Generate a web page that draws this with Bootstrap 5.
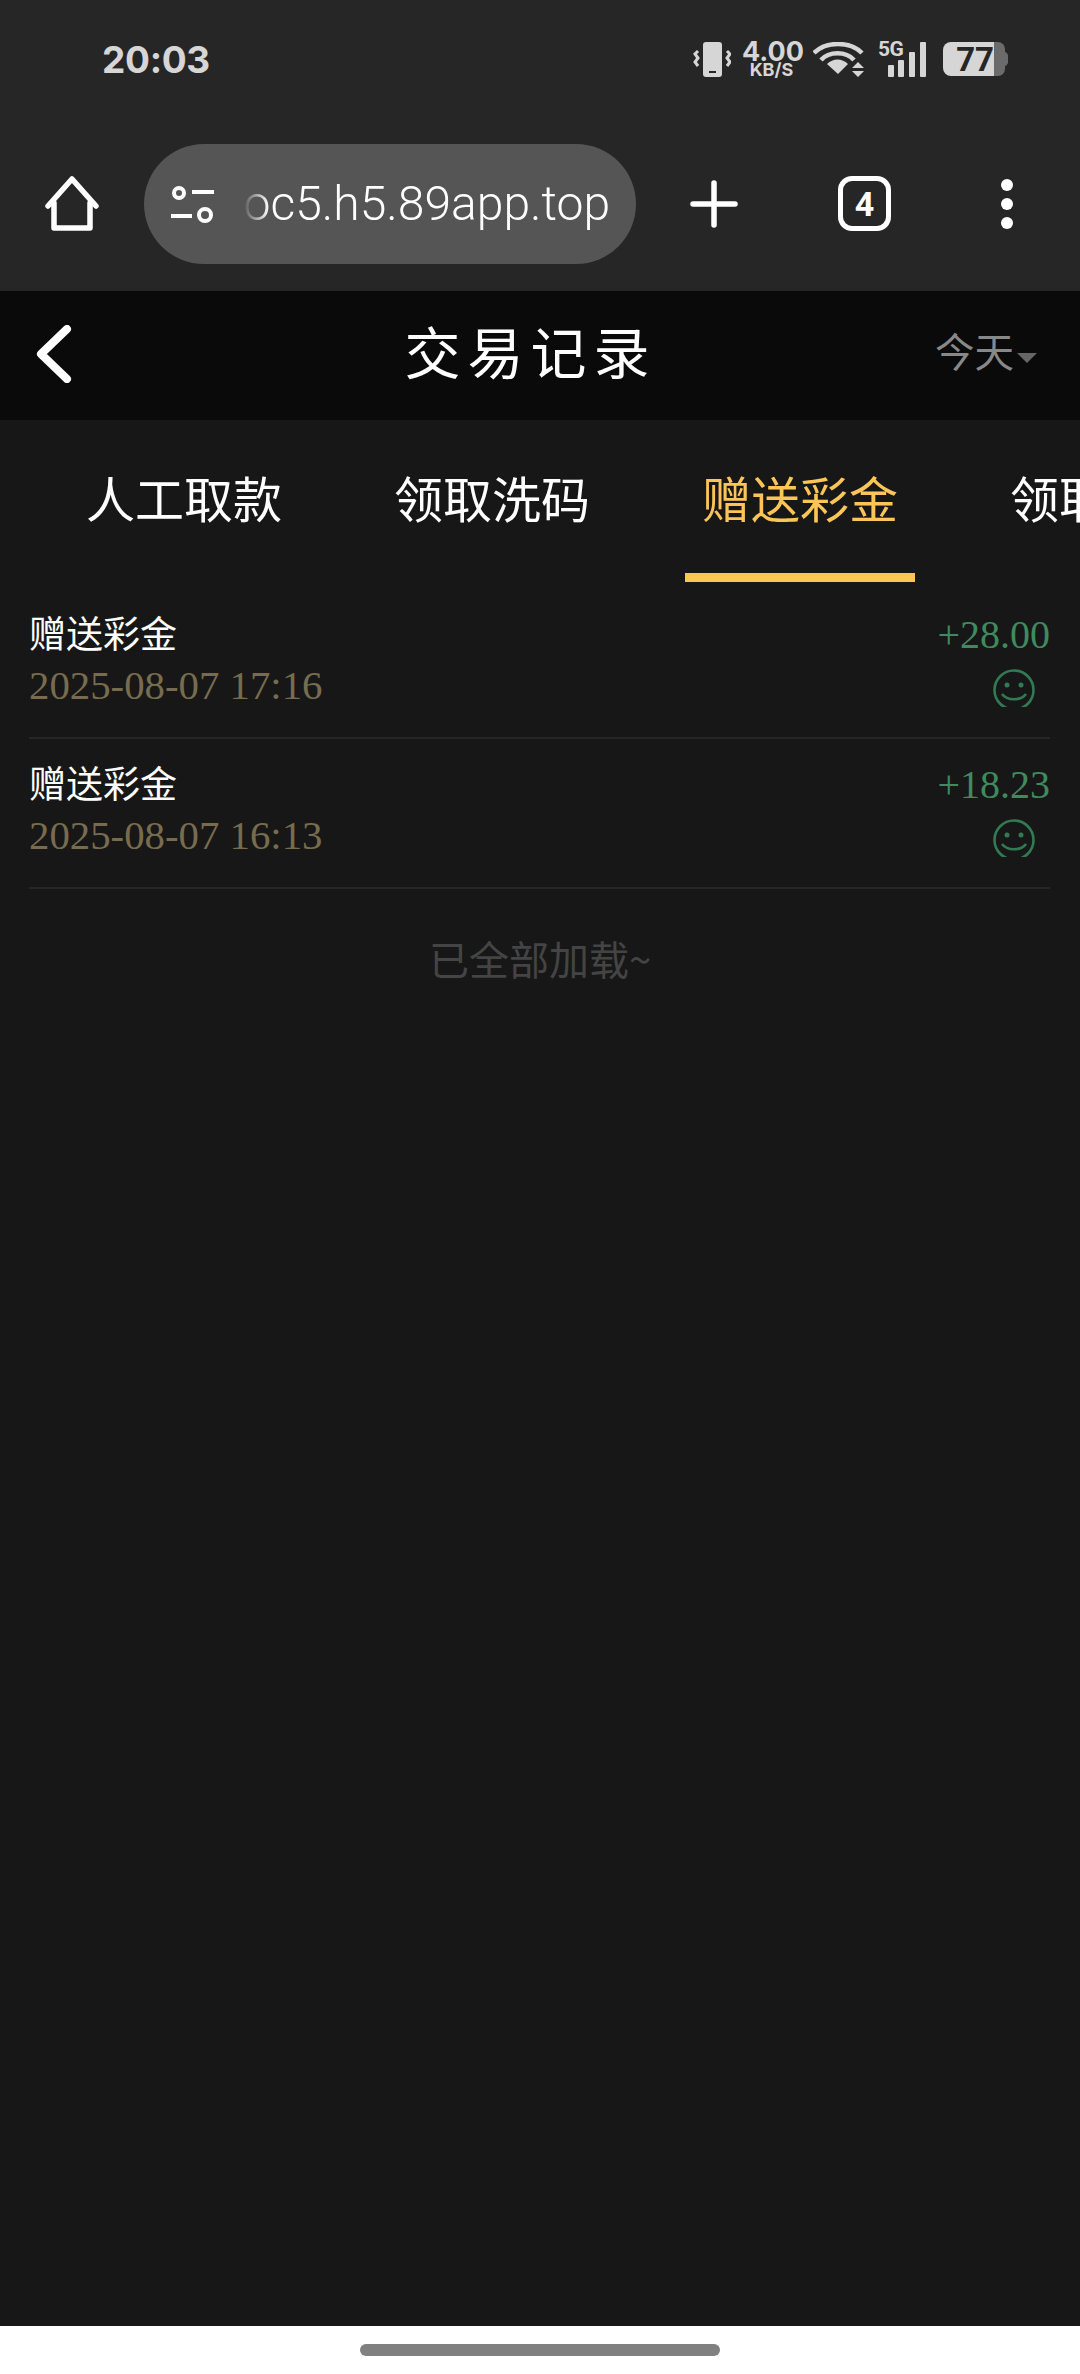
<!DOCTYPE html>
<html lang="zh-CN">
<head>
  <meta charset="UTF-8" />
  <meta name="viewport" content="width=device-width, initial-scale=1" />
  <title>交易记录</title>
  <link href="https://cdn.jsdelivr.net/npm/bootstrap@5.3.0/dist/css/bootstrap.min.css" rel="stylesheet" />
  <style>
    html, body { height: 2374px; overflow: hidden; }
    body {
      background: #171717;
      color: #fff;
      font-family: "Noto Sans CJK SC", "Liberation Sans", sans-serif;
    }
    svg { display: block; flex: none; }

    .phone-top { background: #262626; height: 291px; }
    .status-row { height: 118px; padding-left: 102px; padding-right: 72px; color: #d6d6d6; }
    .status-time { font: 700 37px/1 Inter, Roboto, sans-serif; letter-spacing: -.3px; }
    .status-speed { width: 59px; margin: 0 12px 0 11px; text-align: center; font-family: Inter, Roboto, sans-serif; font-weight: 700; }
    .speed-num { font-size: 27px; line-height: 21px; }
    .speed-unit { font-size: 18px; line-height: 14px; margin-top: 1px; white-space: nowrap; }
    .status-signal { margin-left: 14px; width: 48px; height: 35px; position: relative; }
    .signal-label { position: absolute; left: 0; top: -3px; font: 700 21px/21px Roboto, sans-serif; letter-spacing: -.5px; }
    .status-battery { margin-left: 17px; width: 65px; height: 34px; position: relative; }
    .battery-label {
      position: absolute; left: 0; top: 0; width: 51px; height: 34px;
      color: #262626; font: 700 33px/35px Roboto, sans-serif; text-align: right;
    }

    .tool-row { height: 171px; padding-left: 45px; }
    .url-pill { width: 492px; height: 120px; margin: 0 54px 0 45px; background: #555; padding: 0 26px; }
    .url-text {
      width: 379px; margin-left: 20px; overflow: hidden; white-space: nowrap;
      font: 300 48px/60px Roboto, sans-serif;
      -webkit-mask-image: linear-gradient(to right, transparent 8px, #000 34px);
      mask-image: linear-gradient(to right, transparent 8px, #000 34px);
    }
    .tab-count {
      width: 53px; height: 55px; margin: 0 110px 0 100px;
      border: 5px solid #fff; border-radius: 14px;
      font: 700 34px/1 Roboto, sans-serif;
    }

    .page-head { background: #0a0a0a; height: 129px; padding-left: 36px; }
    .head-back { width: 105px; padding-bottom: 3px; }
    .head-title { font-size: 56px; letter-spacing: 7px; line-height: 1; padding-bottom: 12px; }
    .head-date { width: 160px; color: #888; font-size: 39.5px; padding: 0 0 12px 15px; }
    .head-caret {
      width: 0; height: 0; margin: 16px 0 0 3px;
      border-left: 10px solid transparent; border-right: 10px solid transparent; border-top: 10px solid #666;
    }

    .record-tabs { height: 162px; padding-left: 69px; gap: 78px; overflow: hidden; flex-wrap: nowrap; }
    .record-tabs .nav-link {
      flex: none; width: 230px; height: 162px; padding: 47px 0 0;
      color: #fff; font-size: 49px; line-height: 60px; text-align: center; white-space: nowrap;
      border-bottom: 9px solid transparent;
    }
    .record-tabs .nav-link.active { color: #fdc558; border-bottom-color: #fdc558; }

    .record-list { margin: 7px 30px 0 29px; }
    .record-list.list-group-flush > .list-group-item {
      background: transparent; color: #fff; height: 150px;
      padding: 21px 0 0; border-color: #262626; border-width: 0 0 2px;
    }
    .record-name { font-size: 37px; line-height: 50px; margin: -3px 0 3px; }
    .record-date, .record-amount { font-family: "Liberation Serif", serif; }
    .record-date { color: #786c4e; font-size: 40.8px; line-height: 52px; }
    .record-amount { color: #3f8a5e; font-size: 40px; line-height: 50px; }
    .record-face { margin: 9px 15px 0 auto; }

    .list-end { color: #444; font-size: 40px; line-height: 50px; margin-top: 44px; text-align: center; }

    .gesture-bar { height: 48px; background: #fff; }
    .gesture-pill { width: 360px; height: 12px; border-radius: 6px; background: #808080; }
  </style>
</head>
<body class="d-flex flex-column">
  <div class="phone-top">
    <div class="status-row d-flex align-items-center">
      <div class="status-time me-auto">20:03</div>
      <svg width="38" height="35" viewBox="0 0 38 35" fill="none">
        <rect x="10" y="0" width="19" height="35" rx="3" fill="#d6d6d6" />
        <rect x="16" y="29" width="7" height="2" fill="#262626" />
        <path d="M5 9l-3 3 3 4-3 4 3 4M34 9l3 3-3 4 3 4-3 4" stroke="#d6d6d6" stroke-width="3" />
      </svg>
      <div class="status-speed">
        <div class="speed-num">4.00</div>
        <div class="speed-unit">KB/S</div>
      </div>
      <svg width="51" height="35" viewBox="0 0 51 35" fill="none">
        <path d="M1 11C13 -1 37 -1 49 11" stroke="#d6d6d6" stroke-width="4.500" />
        <path d="M8 18C16 9 33 9 41 18" stroke="#d6d6d6" stroke-width="4.500" />
        <path d="M14 22C20 16 29 16 35 22L25 32Z" fill="#d6d6d6" />
        <path d="M45 20l6 6H39ZM45 35l6-6H39Z" fill="#d6d6d6" />
      </svg>
      <div class="status-signal">
        <span class="signal-label">5G</span>
        <svg width="48" height="35" viewBox="0 0 48 35" fill="#d6d6d6">
          <rect x="10" y="23" width="6" height="12" rx="1" />
          <rect x="20" y="18" width="6" height="17" rx="1" />
          <rect x="31" y="10" width="6" height="25" rx="1" />
          <rect x="42" y="0" width="6" height="35" rx="1" />
        </svg>
      </div>
      <div class="status-battery">
        <svg width="65" height="34" viewBox="0 0 65 34">
          <path d="M8 0H51V34H8A8 8 0 0 1 0 26V8A8 8 0 0 1 8 0Z" fill="#d6d6d6" />
          <path d="M51 0H55A7 7 0 0 1 62 7V10A3.5 7 0 0 1 62 24V27A7 7 0 0 1 55 34H51Z" fill="#6b6b6b" />
        </svg>
        <div class="battery-label">77</div>
      </div>
    </div>
    <div class="tool-row d-flex align-items-center">
      <svg width="54" height="55" viewBox="0 0 54 55" fill="none" stroke="#fff" stroke-width="5.500" stroke-linecap="round" stroke-linejoin="round">
        <path d="M3 30L27 3L51 30" />
        <path d="M9 27V52H45V27" />
      </svg>
      <div class="url-pill rounded-pill d-flex align-items-center">
        <svg width="45" height="38" viewBox="0 0 45 38" fill="none" stroke="#fff" stroke-width="4">
          <circle cx="9" cy="8" r="5" />
          <path d="M22 7H44M1 31H22" />
          <circle cx="35" cy="30" r="6" />
        </svg>
        <div class="url-text d-flex justify-content-end"><span>oc5.h5.89app.top</span></div>
      </div>
      <svg width="48" height="48" viewBox="0 0 48 48" stroke="#fff" stroke-width="5.500" stroke-linecap="round">
        <path d="M24 3V45M3 24H45" />
      </svg>
      <div class="tab-count d-flex align-items-center justify-content-center">4</div>
      <svg width="12" height="50" viewBox="0 0 12 50" fill="#fff">
        <circle cx="6" cy="6" r="6" />
        <circle cx="6" cy="25" r="6" />
        <circle cx="6" cy="44" r="6" />
      </svg>
    </div>
  </div>

  <div class="page-head d-flex align-items-center">
    <div class="head-back">
      <svg width="36" height="58" viewBox="0 0 36 58" fill="none" stroke="#fff" stroke-width="8" stroke-linecap="round" stroke-linejoin="round">
        <path d="M31 4L5 29L31 54" />
      </svg>
    </div>
    <div class="head-title flex-grow-1 text-center">交易记录</div>
    <div class="head-date d-flex align-items-center">今天<span class="head-caret"></span></div>
  </div>

  <nav class="nav record-tabs">
    <a class="nav-link" href="#">人工取款</a>
    <a class="nav-link" href="#">领取洗码</a>
    <a class="nav-link active" href="#">赠送彩金</a>
    <a class="nav-link" href="#">领取返水</a>
  </nav>

  <main class="flex-grow-1">
    <ul class="list-group list-group-flush record-list">
      <li class="list-group-item d-flex justify-content-between">
        <div>
          <div class="record-name">赠送彩金</div>
          <div class="record-date">2025-08-07 17:16</div>
        </div>
        <div>
          <div class="record-amount">+28.00</div>
          <svg class="record-face" width="42" height="38" viewBox="0 0 42 38" fill="none" stroke="#317a54" stroke-width="2.600">
            <circle cx="21" cy="21" r="19.500" />
            <circle cx="14" cy="16" r="2.500" fill="#317a54" stroke="none" />
            <circle cx="28" cy="16" r="2.500" fill="#317a54" stroke="none" />
            <path d="M9 25C14 32 28 32 33 25" />
          </svg>
        </div>
      </li>
      <li class="list-group-item d-flex justify-content-between">
        <div>
          <div class="record-name">赠送彩金</div>
          <div class="record-date">2025-08-07 16:13</div>
        </div>
        <div>
          <div class="record-amount">+18.23</div>
          <svg class="record-face" width="42" height="38" viewBox="0 0 42 38" fill="none" stroke="#317a54" stroke-width="2.600">
            <circle cx="21" cy="21" r="19.500" />
            <circle cx="14" cy="16" r="2.500" fill="#317a54" stroke="none" />
            <circle cx="28" cy="16" r="2.500" fill="#317a54" stroke="none" />
            <path d="M9 25C14 32 28 32 33 25" />
          </svg>
        </div>
      </li>
    </ul>
    <div class="list-end">已全部加载~</div>
  </main>

  <div class="gesture-bar d-flex justify-content-center align-items-center">
    <div class="gesture-pill"></div>
  </div>

  <script src="https://cdn.jsdelivr.net/npm/bootstrap@5.3.0/dist/js/bootstrap.bundle.min.js"></script>
</body>
</html>
